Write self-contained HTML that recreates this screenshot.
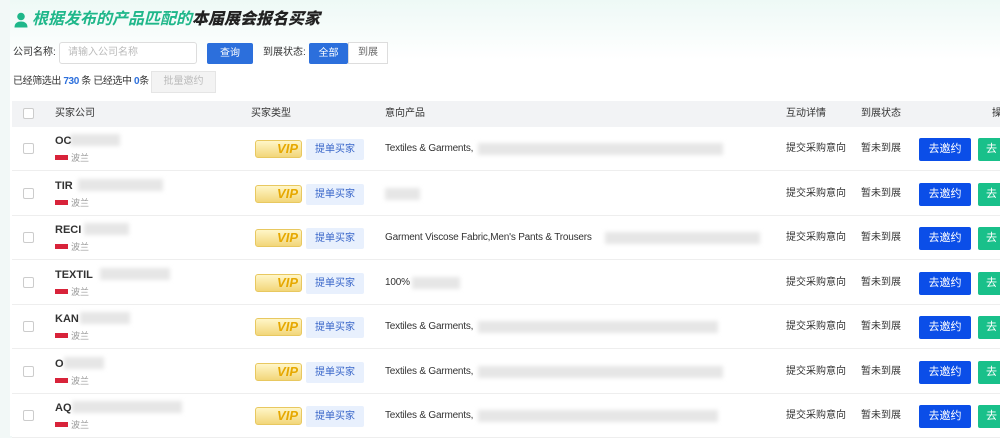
<!DOCTYPE html>
<html><head><meta charset="utf-8"><style>
*{margin:0;padding:0;box-sizing:border-box}
body{width:1000px;height:436px;overflow:hidden;background:#f2f8f7;font-family:"Liberation Sans","Noto Sans CJK SC",sans-serif;font-size:10px;color:#333;position:relative}
.main{position:absolute;left:10px;top:0;right:0;bottom:0;background:linear-gradient(180deg,#eef9f6 0,#fff 60px,#fff 100%)}
.a{position:absolute;line-height:12px;white-space:nowrap}
.title{left:32px;top:10px;font-size:16px;line-height:20px;font-weight:bold;font-style:italic;color:#1fb78a;letter-spacing:0}
.title b{color:#222}
.inp{border:1px solid #ddd;border-radius:3px;background:#fff;color:#bbb;padding-left:8px;line-height:20px;height:22px}
.btn{background:#2c6fdc;color:#fff;text-align:center;border-radius:2px;line-height:21px;height:21px}
.thead{left:12px;top:101px;width:990px;height:26px;background:#f2f3f5}
.cb{width:11px;height:11px;border:1px solid #ccc;background:#fff;border-radius:2px}
.row{left:12px;width:990px;height:44px;border-bottom:1px solid #eee;background:#fff}
.blur{background:#e6e6e6;filter:blur(2px);height:12px}
.vip{width:47px;height:18px;border-radius:3px;background:linear-gradient(#fff6c8,#f2d67a);border:1px solid #e8c860;color:#e6a800;font-weight:bold;font-style:italic;font-size:13px;line-height:16px;text-align:right;padding-right:3px}
.tag{width:58px;height:21px;background:#e8f0fd;color:#3966c9;text-align:center;line-height:21px;border-radius:2px}
.go{width:52px;height:23px;background:#0b4ee8;color:#fff;text-align:center;line-height:23px;border-radius:2px;font-size:11px}
.go2{width:30px;height:23px;background:#19c08a;color:#fff;line-height:23px;padding-left:8px;border-radius:2px 0 0 2px;font-size:11px}
.flag{width:13px;height:5px;background:#d8233a}
</style></head><body>
<div class="main"></div>
<svg class="a" style="left:14px;top:12px" width="14" height="16" viewBox="0 0 14 16"><circle cx="7" cy="4.5" r="3.8" fill="#1fb78a"/><path d="M0.5 15.5C0.5 11 3.5 9.5 7 9.5S13.5 11 13.5 15.5Z" fill="#1fb78a"/></svg>
<div class="a title">根据发布的产品匹配的<b>本届展会报名买家</b></div>
<div class="a" style="left:13px;top:47px">公司名称:</div>
<div class="a inp" style="left:59px;top:42px;width:138px">请输入公司名称</div>
<div class="a btn" style="left:207px;top:43px;width:46px">查询</div>
<div class="a" style="left:263px;top:47px">到展状态:</div>
<div class="a btn" style="left:309px;top:43px;width:39px">全部</div>
<div class="a" style="left:348px;top:42px;width:40px;height:22px;border:1px solid #ddd;background:#fff;text-align:center;line-height:20px;color:#666">到展</div>
<div class="a" style="left:13px;top:76px;letter-spacing:-0.4px">已经筛选出 <b style="color:#2c6fdc">730</b> 条 已经选中 <b style="color:#2c6fdc">0</b>条</div>
<div class="a" style="left:151px;top:71px;width:65px;height:22px;background:#f3f3f3;border:1px solid #e5e5e5;color:#bbb;text-align:center;line-height:20px">批量邀约</div>
<div class="a thead"></div>
<div class="a cb" style="left:23px;top:108px"></div>
<div class="a" style="left:55px;top:108px">买家公司</div>
<div class="a" style="left:251px;top:108px">买家类型</div>
<div class="a" style="left:385px;top:108px">意向产品</div>
<div class="a" style="left:786px;top:108px">互动详情</div>
<div class="a" style="left:861px;top:108px">到展状态</div>
<div class="a" style="left:992px;top:108px">操</div>

<div id="rows"></div>
<script>
var d=[["OC",70,50,"Textiles &amp; Garments,",478,245],["TIR",78,85,"",385,35],["RECI",84,45,"Garment Viscose Fabric,Men's Pants &amp; Trousers",605,155],["TEXTIL",100,70,"100%",412,48],["KAN",80,50,"Textiles &amp; Garments,",478,240],["O",64,40,"Textiles &amp; Garments,",478,245],["AQ",72,110,"Textiles &amp; Garments,",478,240]];
var h="";
d.forEach(function(r,i){var t=127+i*44.5;
h+='<div class="a row" style="top:'+t+'px"></div>';
h+='<div class="a cb" style="left:23px;top:'+(t+16)+'px"></div>';
h+='<div class="a blur" style="left:'+r[1]+'px;top:'+(t+7)+'px;width:'+r[2]+'px"></div>';
h+='<div class="a" style="left:55px;top:'+(t+8)+'px;font-weight:bold;font-size:11px">'+r[0]+'</div>';
h+='<div class="a flag" style="left:55px;top:'+(t+28)+'px"></div>';
h+='<div class="a" style="left:71px;top:'+(t+25)+'px;color:#999;font-size:9px">波兰</div>';
h+='<div class="a vip" style="left:255px;top:'+(t+13)+'px">VIP</div>';
h+='<div class="a tag" style="left:306px;top:'+(t+12)+'px">提单买家</div>';
h+='<div class="a blur" style="left:'+r[4]+'px;top:'+(t+16)+'px;width:'+r[5]+'px"></div>';
h+='<div class="a" style="left:385px;top:'+(t+16)+'px;letter-spacing:-0.2px">'+r[3]+'</div>';
h+='<div class="a" style="left:786px;top:'+(t+16)+'px">提交采购意向</div>';
h+='<div class="a" style="left:861px;top:'+(t+16)+'px">暂未到展</div>';
h+='<div class="a go" style="left:919px;top:'+(t+11)+'px">去邀约</div>';
h+='<div class="a go2" style="left:978px;top:'+(t+11)+'px">去</div>';
});
document.getElementById("rows").innerHTML=h;
</script>
</body></html>
